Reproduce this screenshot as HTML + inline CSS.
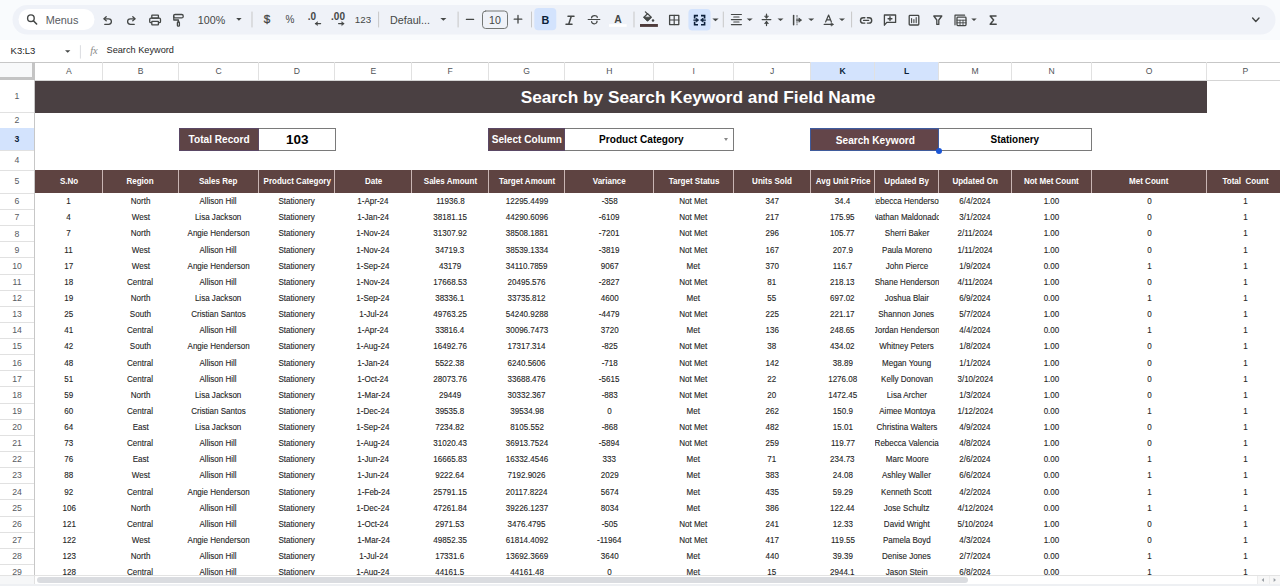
<!DOCTYPE html>
<html><head><meta charset="utf-8"><title>Search by Search Keyword and Field Name</title>
<style>
*{box-sizing:border-box;margin:0;padding:0}
html,body{width:1280px;height:586px;overflow:hidden;background:#f9fbfd;font-family:"Liberation Sans",sans-serif;}
.a{position:absolute}
.c{position:absolute;display:flex;align-items:center;justify-content:center;white-space:nowrap;overflow:hidden}
#tb{left:12.5px;top:5px;width:1263px;height:29.5px;border-radius:15px;background:#eef2f9}
#menus{left:18.5px;top:8.5px;width:76px;height:21.5px;border-radius:11px;background:#fff}
.ic{position:absolute;color:#444746}
.sep{position:absolute;top:12.5px;width:1px;height:14px;background:#c7c7c7}
#fb{left:0;top:40px;width:1280px;height:22px;background:#fff}
#grid{left:0;top:62px;width:1280px;height:513px;background:#fff;overflow:hidden}
.hl{position:absolute;height:1px;background:#e1e1e1}
.vl{position:absolute;width:1px;background:#e1e1e1}
.colh{position:absolute;top:0;height:18px;font-size:8.6px;color:#4f5357;display:flex;align-items:center;justify-content:center}
.rowh{position:absolute;left:0;width:34px;font-size:8.7px;color:#575b5f;display:flex;align-items:center;justify-content:center}
.d{position:absolute;display:flex;align-items:center;justify-content:center;white-space:nowrap;overflow:hidden;font-size:8.7px;color:#1f1f1f;height:16px;-webkit-text-stroke:0.12px #1f1f1f}
.d span{display:inline-block;transform:translateY(0.25px) scaleX(0.925)}
.h{position:absolute;display:flex;align-items:center;justify-content:center;white-space:pre;overflow:hidden;font-size:8.9px;font-weight:bold;color:#fff;top:107.6px;height:23px}
.h span{display:inline-block;transform:scaleX(0.905)}
</style></head><body>

<div class="a" id="fb"></div>
<svg class="a" style="left:0;top:0" width="1280" height="62" viewBox="0 0 1280 62" fill="none" stroke="#444746" stroke-width="1.3" stroke-linecap="round" stroke-linejoin="round">
<rect x="12.5" y="5" width="1263" height="29.5" rx="14.75" fill="#eff2f8" stroke="none"/>
<rect x="18.5" y="9" width="76" height="21" rx="10.5" fill="#fff" stroke="none"/>
<circle cx="30.9" cy="18.2" r="3.3" stroke-width="1.4"/><path d="M33.4 20.8 L36.6 24" stroke-width="1.6"/>
<path d="M104.2 18.8 H108.6 A2.8 2.8 0 0 1 108.6 24.4 H104.8"/><path d="M106.2 16.8 L104 18.8 L106.2 20.8"/>
<path d="M134.8 18.8 H130.4 A2.8 2.8 0 0 0 130.4 24.4 H134.2"/><path d="M132.8 16.8 L135 18.8 L132.8 20.8"/>
<rect x="151.8" y="15.2" width="6.6" height="3" rx="0.4"/><rect x="149.7" y="18.2" width="10.8" height="4.4" rx="1.2"/><rect x="151.8" y="21.4" width="6.6" height="3.4" rx="0.4" fill="#eff2f8"/>
<rect x="173.6" y="14.5" width="9.6" height="3.4" rx="1.5"/><path d="M173.8 16.4 V20 H178.4 V22"/><rect x="177.4" y="22" width="2" height="4.2" rx="0.8"/>
<path d="M252 12 V27" stroke="#c7c7c7" stroke-width="1"/>
<path d="M378.6 12 V27" stroke="#c7c7c7" stroke-width="1"/>
<path d="M458.1 12 V27" stroke="#c7c7c7" stroke-width="1"/>
<path d="M531.5 12 V27" stroke="#c7c7c7" stroke-width="1"/>
<path d="M634 12 V27" stroke="#c7c7c7" stroke-width="1"/>
<path d="M723.3 12 V27" stroke="#c7c7c7" stroke-width="1"/>
<path d="M851.6 12 V27" stroke="#c7c7c7" stroke-width="1"/>
<path d="M236.2 18 L241.6 18 L238.89999999999998 20.8 Z" fill="#444746" stroke="none"/>
<path d="M440.4 18 L446.4 18 L443.4 20.8 Z" fill="#444746" stroke="none"/>
<path d="M712.4 18.4 L718.6 18.4 L715.5 21.2 Z" fill="#444746" stroke="none"/>
<path d="M746.7 18.5 L752.7 18.5 L749.7 21.1 Z" fill="#444746" stroke="none"/>
<path d="M777.5 18.5 L783.5 18.5 L780.5 21.1 Z" fill="#444746" stroke="none"/>
<path d="M808.2 18.5 L814.2 18.5 L811.2 21.1 Z" fill="#444746" stroke="none"/>
<path d="M839 18.5 L845 18.5 L842.0 21.1 Z" fill="#444746" stroke="none"/>
<path d="M971.3 18.5 L976.7 18.5 L974.0 21.1 Z" fill="#444746" stroke="none"/>
<path d="M466.4 19.4 H473.6" stroke-width="1.3"/>
<path d="M514.2 19.2 H521.8 M518 15.4 V23" stroke-width="1.3"/>
<rect x="482.5" y="11" width="25" height="17.5" rx="3.2" stroke="#747775" stroke-width="1"/>
<rect x="534.3" y="8" width="22" height="22.2" rx="4" fill="#d3e3fd" stroke="none"/>
<rect x="688.4" y="8.9" width="22.2" height="21.5" rx="4" fill="#d3e3fd" stroke="none"/>
<path d="M568 16.2 H574 M566 24.2 H572 M571.3 16.2 L568.7 24.2" stroke-width="1.5"/>
<path d="M588.2 19.5 H599.8" stroke-width="1.2"/><path d="M591.6 17.8 C591.8 15 597.4 15 597.2 17.4" stroke-width="1.3"/><path d="M597 21.2 C597.2 24.6 591.6 24.6 591.6 21.6" stroke-width="1.3"/>
<rect x="609" y="24.2" width="17.7" height="2.6" fill="#ffffff" stroke="none"/>
<rect x="640" y="24" width="17.9" height="2.9" fill="#4e3b3b" stroke="none"/>
<path d="M645.4 11.9 L647.4 13.9" stroke-width="1.3"/><path d="M647.6 13.6 L651.2 17.2 L647.6 20.8 L644 17.2 Z" stroke-width="1.3"/><path d="M644 17.2 L651.2 17.2 L647.6 20.8 Z" fill="#444746" stroke="#444746" stroke-width="0.8"/><circle cx="653" cy="20.4" r="1.25" fill="#444746" stroke="none"/>
<rect x="669.6" y="15.4" width="9.2" height="9.2" stroke-width="1.3"/><path d="M674.2 15.4 V24.6 M669.6 20 H678.8" stroke-width="1.2"/>
<path d="M698 15.6 H694.6 V18.4 M694.6 21.8 V24.8 H698 M701 15.6 H704.6 V18.4 M704.6 21.8 V24.8 H701" stroke="#0b1f3a" stroke-width="1.6" stroke-linecap="butt" stroke-linejoin="miter"/><path d="M693.8 20.1 H697 M705.4 20.1 H702.2" stroke="#0b1f3a" stroke-width="1.2"/><path d="M696.4 18.3 L698.7 20.1 L696.4 21.9 Z M702.8 18.3 L700.5 20.1 L702.8 21.9 Z" fill="#0b1f3a" stroke="#0b1f3a" stroke-width="0.7"/>
<path d="M731.4 14.5 H741.4 M733.8 17 H739 M731.4 19.6 H741.4 M733.8 22 H739 M731.4 24.6 H741.4" stroke-width="1.2"/>
<path d="M762.2 19.6 H770.8" stroke-width="1.3"/><path d="M766.5 14 V18 M766.5 21.4 V25.6" stroke-width="1.2"/><path d="M764.8 16.4 L766.5 18.2 L768.2 16.4 Z M764.8 23.2 L766.5 21.2 L768.2 23.2 Z" fill="#444746" stroke="#444746" stroke-width="0.8"/>
<path d="M793.6 15.4 V24.8" stroke-width="1.5"/><path d="M797 15.4 V24.8" stroke-width="0.8" stroke-dasharray="1.6 1.2"/><path d="M796.6 20.1 H801" stroke-width="1.2"/><path d="M799.2 18.2 L801.4 20.1 L799.2 22 Z" fill="#444746" stroke="#444746" stroke-width="0.8"/>
<path d="M825.6 22 L828.6 15 L831.4 22 M826.6 19.8 H830.6" stroke-width="1.2"/><path d="M824.2 24.4 H833" stroke-width="1.2"/><path d="M831.4 22.9 L833.4 24.4 L831.4 25.9 Z" fill="#444746" stroke="#444746" stroke-width="0.6"/>
<path d="M864.8 17.7 H863.2 A2.7 2.7 0 0 0 863.2 23.1 H864.8 M867.4 17.7 H869 A2.7 2.7 0 0 1 869 23.1 H867.4 M863.6 20.4 H868.6" stroke-width="1.4"/>
<path d="M884.4 25.2 V15 H895.6 V22.4 H886.8 Z" stroke-width="1.3"/><path d="M890 16.8 V20.6 M888.1 18.7 H891.9" stroke-width="1.4"/>
<rect x="909.2" y="15.4" width="9.6" height="9.6" rx="0.8" stroke-width="1.3"/><path d="M911.6 18.6 V22.6 M913.9 19.6 V22.6 M916.2 17.6 V22.6" stroke-width="1.1"/>
<path d="M933.8 16 H941.8 L938.8 20 V24.4 H936.8 V20 Z" stroke-width="1.3"/>
<path d="M955 24.8 V15.2 H964.6" stroke-width="1.2"/><rect x="957" y="17.2" width="9" height="8.4" rx="0.8" stroke-width="1.3"/><path d="M957 20.2 H966 M957 22.8 H966 M960 20.2 V25.6 M963 20.2 V25.6" stroke-width="0.9"/>
<path d="M996 15.9 H990.2 L993.6 20 L990.2 24.2 H996.2" stroke-width="1.5"/>
<path d="M320.6 23.6 H315.4" stroke-width="1.2"/><path d="M317.2 21.9 L315.2 23.6 L317.2 25.3 Z" fill="#444746" stroke="#444746" stroke-width="0.6"/>
<path d="M338.6 23.6 H343.8" stroke-width="1.2"/><path d="M342 21.9 L344 23.6 L342 25.3 Z" fill="#444746" stroke="#444746" stroke-width="0.6"/>
<path d="M1252.6 18 L1255.8 21.4 L1259 18" stroke-width="1.4"/>
<path d="M65 50.2 L70.4 50.2 L67.7 52.8 Z" fill="#444746" stroke="none"/>
<path d="M80.4 45.6 V58.2" stroke="#dadce0" stroke-width="1"/>
</svg>
<div class="c" style="left:44px;top:12px;width:36px;height:15px;font-size:10.9px;color:#444746;color:#575b5f">Menus</div>
<div class="c" style="left:196px;top:12px;width:31px;height:15px;font-size:10.7px;color:#444746;">100%</div>
<div class="c" style="left:262px;top:11.4px;width:10px;height:15px;font-size:11.6px;color:#444746;font-weight:normal;-webkit-text-stroke:0.3px #444746">$</div>
<div class="c" style="left:284px;top:12px;width:12px;height:15px;font-size:10px;color:#444746;">%</div>
<div class="c" style="left:306px;top:10px;width:12px;height:13px;font-size:10px;color:#444746;font-weight:bold">.0</div>
<div class="c" style="left:330px;top:10px;width:16px;height:13px;font-size:10px;color:#444746;font-weight:bold">.00</div>
<div class="c" style="left:355px;top:12px;width:16px;height:15px;font-size:9.8px;color:#444746;">123</div>
<div class="c" style="left:388px;top:12px;width:44px;height:15px;font-size:10.7px;color:#444746;">Defaul...</div>
<div class="c" style="left:487px;top:12px;width:16px;height:15px;font-size:10.6px;color:#444746;">10</div>
<div class="c" style="left:537px;top:12.5px;width:17px;height:15px;font-size:10.8px;color:#444746;font-weight:bold;color:#0b1f3a">B</div>
<div class="c" style="left:608px;top:12px;width:20px;height:15px;font-size:10.4px;color:#444746;font-weight:bold">A</div>
<div class="c" style="left:6px;top:43px;width:34px;height:15px;font-size:9.5px;color:#444746;color:#1f1f1f">K3:L3</div>
<div class="c" style="left:88px;top:43px;width:12px;height:15px;font-size:10.5px;color:#444746;font-family:'Liberation Serif',serif;color:#8a8a8a"><i>fx</i></div>
<div class="a" style="left:106.5px;top:43px;height:15px;line-height:15px;font-size:9.2px;color:#1f1f1f;white-space:nowrap">Search Keyword</div>
<div class="a" id="grid">
<div class="a" style="left:0;top:0;width:1280px;height:1px;background:#c7c7c7"></div>
<div class="a" style="left:0;top:1px;width:32px;height:15px;background:#f8f9fa"></div>
<div class="a" style="left:31.5px;top:0;width:3px;height:18px;background:#c4c4c4"></div>
<div class="a" style="left:0;top:15px;width:34.5px;height:3.4px;background:#c4c4c4"></div>
<div class="colh" style="left:35px;width:67.5px;">A</div>
<div class="vl" style="left:101.5px;top:0;height:18px"></div>
<div class="colh" style="left:102.5px;width:76px;">B</div>
<div class="vl" style="left:177.5px;top:0;height:18px"></div>
<div class="colh" style="left:178.5px;width:80px;">C</div>
<div class="vl" style="left:257.5px;top:0;height:18px"></div>
<div class="colh" style="left:258.5px;width:76.5px;">D</div>
<div class="vl" style="left:334px;top:0;height:18px"></div>
<div class="colh" style="left:335px;width:76.5px;">E</div>
<div class="vl" style="left:410.5px;top:0;height:18px"></div>
<div class="colh" style="left:411.5px;width:77px;">F</div>
<div class="vl" style="left:487.5px;top:0;height:18px"></div>
<div class="colh" style="left:488.5px;width:76.3px;">G</div>
<div class="vl" style="left:563.8px;top:0;height:18px"></div>
<div class="colh" style="left:564.8px;width:88.9px;">H</div>
<div class="vl" style="left:652.7px;top:0;height:18px"></div>
<div class="colh" style="left:653.7px;width:80px;">I</div>
<div class="vl" style="left:732.7px;top:0;height:18px"></div>
<div class="colh" style="left:733.7px;width:77px;">J</div>
<div class="vl" style="left:809.7px;top:0;height:18px"></div>
<div class="colh" style="left:810.7px;width:64px;background:#d3e3fd;font-weight:bold;color:#0b1f3a;">K</div>
<div class="vl" style="left:873.7px;top:0;height:18px"></div>
<div class="colh" style="left:874.7px;width:64px;background:#d3e3fd;font-weight:bold;color:#0b1f3a;">L</div>
<div class="vl" style="left:937.7px;top:0;height:18px"></div>
<div class="colh" style="left:938.7px;width:72.8px;">M</div>
<div class="vl" style="left:1010.5px;top:0;height:18px"></div>
<div class="colh" style="left:1011.5px;width:80px;">N</div>
<div class="vl" style="left:1090.5px;top:0;height:18px"></div>
<div class="colh" style="left:1091.5px;width:115px;">O</div>
<div class="vl" style="left:1205.5px;top:0;height:18px"></div>
<div class="colh" style="left:1206.5px;width:77.5px;">P</div>
<div class="vl" style="left:1283px;top:0;height:18px"></div>
<div class="rowh" style="top:18px;height:32.3px;">1</div>
<div class="hl" style="left:0;top:50px;width:34px"></div>
<div class="rowh" style="top:50.3px;height:16px;">2</div>
<div class="hl" style="left:0;top:66px;width:34px"></div>
<div class="rowh" style="top:66.3px;height:21.9px;background:#d3e3fd;font-weight:bold;color:#0b1f3a;">3</div>
<div class="hl" style="left:0;top:87.9px;width:34px"></div>
<div class="rowh" style="top:88.2px;height:19.6px;">4</div>
<div class="hl" style="left:0;top:107.5px;width:34px"></div>
<div class="rowh" style="top:107.8px;height:23.4px;">5</div>
<div class="hl" style="left:0;top:130.9px;width:34px"></div>
<div class="rowh" style="top:131.2px;height:16.13px;">6</div>
<div class="hl" style="left:0;top:147.03px;width:34px"></div>
<div class="rowh" style="top:147.33px;height:16.13px;">7</div>
<div class="hl" style="left:0;top:163.16px;width:34px"></div>
<div class="rowh" style="top:163.46px;height:16.13px;">8</div>
<div class="hl" style="left:0;top:179.29px;width:34px"></div>
<div class="rowh" style="top:179.59px;height:16.13px;">9</div>
<div class="hl" style="left:0;top:195.42px;width:34px"></div>
<div class="rowh" style="top:195.72px;height:16.13px;">10</div>
<div class="hl" style="left:0;top:211.55px;width:34px"></div>
<div class="rowh" style="top:211.85px;height:16.13px;">11</div>
<div class="hl" style="left:0;top:227.68px;width:34px"></div>
<div class="rowh" style="top:227.98px;height:16.13px;">12</div>
<div class="hl" style="left:0;top:243.81px;width:34px"></div>
<div class="rowh" style="top:244.11px;height:16.13px;">13</div>
<div class="hl" style="left:0;top:259.94px;width:34px"></div>
<div class="rowh" style="top:260.24px;height:16.13px;">14</div>
<div class="hl" style="left:0;top:276.07px;width:34px"></div>
<div class="rowh" style="top:276.37px;height:16.13px;">15</div>
<div class="hl" style="left:0;top:292.2px;width:34px"></div>
<div class="rowh" style="top:292.5px;height:16.13px;">16</div>
<div class="hl" style="left:0;top:308.33px;width:34px"></div>
<div class="rowh" style="top:308.63px;height:16.13px;">17</div>
<div class="hl" style="left:0;top:324.46px;width:34px"></div>
<div class="rowh" style="top:324.76px;height:16.13px;">18</div>
<div class="hl" style="left:0;top:340.59px;width:34px"></div>
<div class="rowh" style="top:340.89px;height:16.13px;">19</div>
<div class="hl" style="left:0;top:356.72px;width:34px"></div>
<div class="rowh" style="top:357.02px;height:16.13px;">20</div>
<div class="hl" style="left:0;top:372.85px;width:34px"></div>
<div class="rowh" style="top:373.15px;height:16.13px;">21</div>
<div class="hl" style="left:0;top:388.98px;width:34px"></div>
<div class="rowh" style="top:389.28px;height:16.13px;">22</div>
<div class="hl" style="left:0;top:405.11px;width:34px"></div>
<div class="rowh" style="top:405.41px;height:16.13px;">23</div>
<div class="hl" style="left:0;top:421.24px;width:34px"></div>
<div class="rowh" style="top:421.54px;height:16.13px;">24</div>
<div class="hl" style="left:0;top:437.37px;width:34px"></div>
<div class="rowh" style="top:437.67px;height:16.13px;">25</div>
<div class="hl" style="left:0;top:453.5px;width:34px"></div>
<div class="rowh" style="top:453.8px;height:16.13px;">26</div>
<div class="hl" style="left:0;top:469.63px;width:34px"></div>
<div class="rowh" style="top:469.93px;height:16.13px;">27</div>
<div class="hl" style="left:0;top:485.76px;width:34px"></div>
<div class="rowh" style="top:486.06px;height:16.13px;">28</div>
<div class="hl" style="left:0;top:501.89px;width:34px"></div>
<div class="rowh" style="top:502.19px;height:16.13px;">29</div>
<div class="hl" style="left:0;top:518.02px;width:34px"></div>
<div class="vl" style="left:34px;top:18px;height:500px;background:#c7c7c7"></div>
<div class="a" style="left:34px;top:17.5px;width:1246px;height:1px;background:#d5d5d5"></div>
<div class="a" style="left:35px;top:18.6px;width:1171.5px;height:32.4px;background:#4a4042"></div>
<div class="c" style="left:520px;top:19.4px;width:356px;height:32px;font-size:17.25px;font-weight:bold;color:#fff">Search by Search Keyword and Field Name</div>
<div class="a" style="left:178.7px;top:66.4px;width:157px;height:22.6px;border:1px solid #7a7a7a;background:#fff"></div>
<div class="c" style="left:178.7px;top:66.4px;width:80.2px;height:22.6px;background:#5e4446;padding-left:0px;border:1px solid #5a4865;font-size:10.3px;font-weight:bold;color:#fff"><span style="display:inline-block;transform:scaleX(0.98)">Total Record</span></div>
<div class="c" style="left:258.9px;top:66.8px;width:76.8px;height:22px;font-size:13.49px;font-weight:bold;color:#000"><span style="display:inline-block;transform:scaleX(1.0)">103</span></div>
<div class="a" style="left:488.1px;top:66.4px;width:245.8px;height:22.6px;border:1px solid #7a7a7a;background:#fff"></div>
<div class="c" style="left:488.1px;top:66.4px;width:76.8px;height:22.6px;background:#5e4446;padding-left:0px;border:1px solid #5a4865;font-size:10.3px;font-weight:bold;color:#fff"><span style="display:inline-block;transform:scaleX(0.98)">Select Column</span></div>
<div class="c" style="left:564.9px;top:66.4px;width:153.4px;height:22px;font-size:10.35px;font-weight:bold;color:#000"><span style="display:inline-block;transform:scaleX(0.975)">Product Category</span></div>
<div class="a" style="left:723.5px;top:76.3px;width:0;height:0;border-left:2.5px solid transparent;border-right:2.5px solid transparent;border-top:3px solid #888"></div>
<div class="a" style="left:809.8px;top:66.4px;width:282px;height:22.6px;border:1px solid #7a7a7a;background:#fff"></div>
<div class="c" style="left:809.8px;top:66.9px;width:128.9px;height:22.6px;background:#634549;padding-left:2px;border:1px solid #5a4865;font-size:10.3px;font-weight:bold;color:#fff"><span style="display:inline-block;transform:scaleX(0.98)">Search Keyword</span></div>
<div class="c" style="left:938.7px;top:66.4px;width:153.1px;height:22px;font-size:10.19px;font-weight:bold;color:#000"><span style="display:inline-block;transform:scaleX(0.975)">Stationery</span></div>
<div class="a" style="left:809.5px;top:66px;width:129.5px;height:22.6px;border:1.8px solid #3f5b9c;border-right-width:0.8px"></div>
<div class="a" style="left:935.7px;top:86px;width:6px;height:6px;border-radius:50%;background:#1a56d6"></div>
<div class="a" style="left:35px;top:108px;width:1245px;height:23px;background:#5e4341"></div>
<div class="h" style="left:35px;width:67.5px"><span>S.No</span></div>
<div class="a" style="left:101.5px;top:108px;width:1px;height:23px;background:#c9b5b3"></div>
<div class="h" style="left:102.5px;width:76px"><span>Region</span></div>
<div class="a" style="left:177.5px;top:108px;width:1px;height:23px;background:#c9b5b3"></div>
<div class="h" style="left:178.5px;width:80px"><span>Sales Rep</span></div>
<div class="a" style="left:257.5px;top:108px;width:1px;height:23px;background:#c9b5b3"></div>
<div class="h" style="left:258.5px;width:76.5px"><span>Product Category</span></div>
<div class="a" style="left:334px;top:108px;width:1px;height:23px;background:#c9b5b3"></div>
<div class="h" style="left:335px;width:76.5px"><span>Date</span></div>
<div class="a" style="left:410.5px;top:108px;width:1px;height:23px;background:#c9b5b3"></div>
<div class="h" style="left:411.5px;width:77px"><span>Sales Amount</span></div>
<div class="a" style="left:487.5px;top:108px;width:1px;height:23px;background:#c9b5b3"></div>
<div class="h" style="left:488.5px;width:76.3px"><span>Target Amount</span></div>
<div class="a" style="left:563.8px;top:108px;width:1px;height:23px;background:#c9b5b3"></div>
<div class="h" style="left:564.8px;width:88.9px"><span>Variance</span></div>
<div class="a" style="left:652.7px;top:108px;width:1px;height:23px;background:#c9b5b3"></div>
<div class="h" style="left:653.7px;width:80px"><span>Target Status</span></div>
<div class="a" style="left:732.7px;top:108px;width:1px;height:23px;background:#c9b5b3"></div>
<div class="h" style="left:733.7px;width:77px"><span>Units Sold</span></div>
<div class="a" style="left:809.7px;top:108px;width:1px;height:23px;background:#c9b5b3"></div>
<div class="h" style="left:810.7px;width:64px"><span>Avg Unit Price</span></div>
<div class="a" style="left:873.7px;top:108px;width:1px;height:23px;background:#c9b5b3"></div>
<div class="h" style="left:874.7px;width:64px"><span>Updated By</span></div>
<div class="a" style="left:937.7px;top:108px;width:1px;height:23px;background:#c9b5b3"></div>
<div class="h" style="left:938.7px;width:72.8px"><span>Updated On</span></div>
<div class="a" style="left:1010.5px;top:108px;width:1px;height:23px;background:#c9b5b3"></div>
<div class="h" style="left:1011.5px;width:80px"><span>Not Met Count</span></div>
<div class="a" style="left:1090.5px;top:108px;width:1px;height:23px;background:#c9b5b3"></div>
<div class="h" style="left:1091.5px;width:115px"><span>Met Count</span></div>
<div class="a" style="left:1205.5px;top:108px;width:1px;height:23px;background:#c9b5b3"></div>
<div class="h" style="left:1206.5px;width:77.5px"><span>Total  Count</span></div>
<div class="d" style="left:35px;top:131.2px;width:67.5px"><span>1</span></div>
<div class="d" style="left:102.5px;top:131.2px;width:76px"><span>North</span></div>
<div class="d" style="left:178.5px;top:131.2px;width:80px"><span>Allison Hill</span></div>
<div class="d" style="left:258.5px;top:131.2px;width:76.5px"><span>Stationery</span></div>
<div class="d" style="left:335px;top:131.2px;width:76.5px"><span>1-Apr-24</span></div>
<div class="d" style="left:411.5px;top:131.2px;width:77px"><span>11936.8</span></div>
<div class="d" style="left:488.5px;top:131.2px;width:76.3px"><span>12295.4499</span></div>
<div class="d" style="left:564.8px;top:131.2px;width:88.9px"><span>-358</span></div>
<div class="d" style="left:653.7px;top:131.2px;width:80px"><span>Not Met</span></div>
<div class="d" style="left:733.7px;top:131.2px;width:77px"><span>347</span></div>
<div class="d" style="left:810.7px;top:131.2px;width:64px"><span>34.4</span></div>
<div class="d" style="left:874.7px;top:131.2px;width:64px"><span>Rebecca Henderson</span></div>
<div class="d" style="left:938.7px;top:131.2px;width:72.8px"><span>6/4/2024</span></div>
<div class="d" style="left:1011.5px;top:131.2px;width:80px"><span>1.00</span></div>
<div class="d" style="left:1091.5px;top:131.2px;width:115px"><span>0</span></div>
<div class="d" style="left:1206.5px;top:131.2px;width:77.5px"><span>1</span></div>
<div class="d" style="left:35px;top:147.33px;width:67.5px"><span>4</span></div>
<div class="d" style="left:102.5px;top:147.33px;width:76px"><span>West</span></div>
<div class="d" style="left:178.5px;top:147.33px;width:80px"><span>Lisa Jackson</span></div>
<div class="d" style="left:258.5px;top:147.33px;width:76.5px"><span>Stationery</span></div>
<div class="d" style="left:335px;top:147.33px;width:76.5px"><span>1-Jan-24</span></div>
<div class="d" style="left:411.5px;top:147.33px;width:77px"><span>38181.15</span></div>
<div class="d" style="left:488.5px;top:147.33px;width:76.3px"><span>44290.6096</span></div>
<div class="d" style="left:564.8px;top:147.33px;width:88.9px"><span>-6109</span></div>
<div class="d" style="left:653.7px;top:147.33px;width:80px"><span>Not Met</span></div>
<div class="d" style="left:733.7px;top:147.33px;width:77px"><span>217</span></div>
<div class="d" style="left:810.7px;top:147.33px;width:64px"><span>175.95</span></div>
<div class="d" style="left:874.7px;top:147.33px;width:64px"><span>Nathan Maldonado</span></div>
<div class="d" style="left:938.7px;top:147.33px;width:72.8px"><span>3/1/2024</span></div>
<div class="d" style="left:1011.5px;top:147.33px;width:80px"><span>1.00</span></div>
<div class="d" style="left:1091.5px;top:147.33px;width:115px"><span>0</span></div>
<div class="d" style="left:1206.5px;top:147.33px;width:77.5px"><span>1</span></div>
<div class="d" style="left:35px;top:163.46px;width:67.5px"><span>7</span></div>
<div class="d" style="left:102.5px;top:163.46px;width:76px"><span>North</span></div>
<div class="d" style="left:178.5px;top:163.46px;width:80px"><span>Angie Henderson</span></div>
<div class="d" style="left:258.5px;top:163.46px;width:76.5px"><span>Stationery</span></div>
<div class="d" style="left:335px;top:163.46px;width:76.5px"><span>1-Nov-24</span></div>
<div class="d" style="left:411.5px;top:163.46px;width:77px"><span>31307.92</span></div>
<div class="d" style="left:488.5px;top:163.46px;width:76.3px"><span>38508.1881</span></div>
<div class="d" style="left:564.8px;top:163.46px;width:88.9px"><span>-7201</span></div>
<div class="d" style="left:653.7px;top:163.46px;width:80px"><span>Not Met</span></div>
<div class="d" style="left:733.7px;top:163.46px;width:77px"><span>296</span></div>
<div class="d" style="left:810.7px;top:163.46px;width:64px"><span>105.77</span></div>
<div class="d" style="left:874.7px;top:163.46px;width:64px"><span>Sherri Baker</span></div>
<div class="d" style="left:938.7px;top:163.46px;width:72.8px"><span>2/11/2024</span></div>
<div class="d" style="left:1011.5px;top:163.46px;width:80px"><span>1.00</span></div>
<div class="d" style="left:1091.5px;top:163.46px;width:115px"><span>0</span></div>
<div class="d" style="left:1206.5px;top:163.46px;width:77.5px"><span>1</span></div>
<div class="d" style="left:35px;top:179.59px;width:67.5px"><span>11</span></div>
<div class="d" style="left:102.5px;top:179.59px;width:76px"><span>West</span></div>
<div class="d" style="left:178.5px;top:179.59px;width:80px"><span>Allison Hill</span></div>
<div class="d" style="left:258.5px;top:179.59px;width:76.5px"><span>Stationery</span></div>
<div class="d" style="left:335px;top:179.59px;width:76.5px"><span>1-Nov-24</span></div>
<div class="d" style="left:411.5px;top:179.59px;width:77px"><span>34719.3</span></div>
<div class="d" style="left:488.5px;top:179.59px;width:76.3px"><span>38539.1334</span></div>
<div class="d" style="left:564.8px;top:179.59px;width:88.9px"><span>-3819</span></div>
<div class="d" style="left:653.7px;top:179.59px;width:80px"><span>Not Met</span></div>
<div class="d" style="left:733.7px;top:179.59px;width:77px"><span>167</span></div>
<div class="d" style="left:810.7px;top:179.59px;width:64px"><span>207.9</span></div>
<div class="d" style="left:874.7px;top:179.59px;width:64px"><span>Paula Moreno</span></div>
<div class="d" style="left:938.7px;top:179.59px;width:72.8px"><span>1/11/2024</span></div>
<div class="d" style="left:1011.5px;top:179.59px;width:80px"><span>1.00</span></div>
<div class="d" style="left:1091.5px;top:179.59px;width:115px"><span>0</span></div>
<div class="d" style="left:1206.5px;top:179.59px;width:77.5px"><span>1</span></div>
<div class="d" style="left:35px;top:195.72px;width:67.5px"><span>17</span></div>
<div class="d" style="left:102.5px;top:195.72px;width:76px"><span>West</span></div>
<div class="d" style="left:178.5px;top:195.72px;width:80px"><span>Angie Henderson</span></div>
<div class="d" style="left:258.5px;top:195.72px;width:76.5px"><span>Stationery</span></div>
<div class="d" style="left:335px;top:195.72px;width:76.5px"><span>1-Sep-24</span></div>
<div class="d" style="left:411.5px;top:195.72px;width:77px"><span>43179</span></div>
<div class="d" style="left:488.5px;top:195.72px;width:76.3px"><span>34110.7859</span></div>
<div class="d" style="left:564.8px;top:195.72px;width:88.9px"><span>9067</span></div>
<div class="d" style="left:653.7px;top:195.72px;width:80px"><span>Met</span></div>
<div class="d" style="left:733.7px;top:195.72px;width:77px"><span>370</span></div>
<div class="d" style="left:810.7px;top:195.72px;width:64px"><span>116.7</span></div>
<div class="d" style="left:874.7px;top:195.72px;width:64px"><span>John Pierce</span></div>
<div class="d" style="left:938.7px;top:195.72px;width:72.8px"><span>1/9/2024</span></div>
<div class="d" style="left:1011.5px;top:195.72px;width:80px"><span>0.00</span></div>
<div class="d" style="left:1091.5px;top:195.72px;width:115px"><span>1</span></div>
<div class="d" style="left:1206.5px;top:195.72px;width:77.5px"><span>1</span></div>
<div class="d" style="left:35px;top:211.85px;width:67.5px"><span>18</span></div>
<div class="d" style="left:102.5px;top:211.85px;width:76px"><span>Central</span></div>
<div class="d" style="left:178.5px;top:211.85px;width:80px"><span>Allison Hill</span></div>
<div class="d" style="left:258.5px;top:211.85px;width:76.5px"><span>Stationery</span></div>
<div class="d" style="left:335px;top:211.85px;width:76.5px"><span>1-Nov-24</span></div>
<div class="d" style="left:411.5px;top:211.85px;width:77px"><span>17668.53</span></div>
<div class="d" style="left:488.5px;top:211.85px;width:76.3px"><span>20495.576</span></div>
<div class="d" style="left:564.8px;top:211.85px;width:88.9px"><span>-2827</span></div>
<div class="d" style="left:653.7px;top:211.85px;width:80px"><span>Not Met</span></div>
<div class="d" style="left:733.7px;top:211.85px;width:77px"><span>81</span></div>
<div class="d" style="left:810.7px;top:211.85px;width:64px"><span>218.13</span></div>
<div class="d" style="left:874.7px;top:211.85px;width:64px"><span>Shane Henderson</span></div>
<div class="d" style="left:938.7px;top:211.85px;width:72.8px"><span>4/11/2024</span></div>
<div class="d" style="left:1011.5px;top:211.85px;width:80px"><span>1.00</span></div>
<div class="d" style="left:1091.5px;top:211.85px;width:115px"><span>0</span></div>
<div class="d" style="left:1206.5px;top:211.85px;width:77.5px"><span>1</span></div>
<div class="d" style="left:35px;top:227.98px;width:67.5px"><span>19</span></div>
<div class="d" style="left:102.5px;top:227.98px;width:76px"><span>North</span></div>
<div class="d" style="left:178.5px;top:227.98px;width:80px"><span>Lisa Jackson</span></div>
<div class="d" style="left:258.5px;top:227.98px;width:76.5px"><span>Stationery</span></div>
<div class="d" style="left:335px;top:227.98px;width:76.5px"><span>1-Sep-24</span></div>
<div class="d" style="left:411.5px;top:227.98px;width:77px"><span>38336.1</span></div>
<div class="d" style="left:488.5px;top:227.98px;width:76.3px"><span>33735.812</span></div>
<div class="d" style="left:564.8px;top:227.98px;width:88.9px"><span>4600</span></div>
<div class="d" style="left:653.7px;top:227.98px;width:80px"><span>Met</span></div>
<div class="d" style="left:733.7px;top:227.98px;width:77px"><span>55</span></div>
<div class="d" style="left:810.7px;top:227.98px;width:64px"><span>697.02</span></div>
<div class="d" style="left:874.7px;top:227.98px;width:64px"><span>Joshua Blair</span></div>
<div class="d" style="left:938.7px;top:227.98px;width:72.8px"><span>6/9/2024</span></div>
<div class="d" style="left:1011.5px;top:227.98px;width:80px"><span>0.00</span></div>
<div class="d" style="left:1091.5px;top:227.98px;width:115px"><span>1</span></div>
<div class="d" style="left:1206.5px;top:227.98px;width:77.5px"><span>1</span></div>
<div class="d" style="left:35px;top:244.11px;width:67.5px"><span>25</span></div>
<div class="d" style="left:102.5px;top:244.11px;width:76px"><span>South</span></div>
<div class="d" style="left:178.5px;top:244.11px;width:80px"><span>Cristian Santos</span></div>
<div class="d" style="left:258.5px;top:244.11px;width:76.5px"><span>Stationery</span></div>
<div class="d" style="left:335px;top:244.11px;width:76.5px"><span>1-Jul-24</span></div>
<div class="d" style="left:411.5px;top:244.11px;width:77px"><span>49763.25</span></div>
<div class="d" style="left:488.5px;top:244.11px;width:76.3px"><span>54240.9288</span></div>
<div class="d" style="left:564.8px;top:244.11px;width:88.9px"><span>-4479</span></div>
<div class="d" style="left:653.7px;top:244.11px;width:80px"><span>Not Met</span></div>
<div class="d" style="left:733.7px;top:244.11px;width:77px"><span>225</span></div>
<div class="d" style="left:810.7px;top:244.11px;width:64px"><span>221.17</span></div>
<div class="d" style="left:874.7px;top:244.11px;width:64px"><span>Shannon Jones</span></div>
<div class="d" style="left:938.7px;top:244.11px;width:72.8px"><span>5/7/2024</span></div>
<div class="d" style="left:1011.5px;top:244.11px;width:80px"><span>1.00</span></div>
<div class="d" style="left:1091.5px;top:244.11px;width:115px"><span>0</span></div>
<div class="d" style="left:1206.5px;top:244.11px;width:77.5px"><span>1</span></div>
<div class="d" style="left:35px;top:260.24px;width:67.5px"><span>41</span></div>
<div class="d" style="left:102.5px;top:260.24px;width:76px"><span>Central</span></div>
<div class="d" style="left:178.5px;top:260.24px;width:80px"><span>Allison Hill</span></div>
<div class="d" style="left:258.5px;top:260.24px;width:76.5px"><span>Stationery</span></div>
<div class="d" style="left:335px;top:260.24px;width:76.5px"><span>1-Apr-24</span></div>
<div class="d" style="left:411.5px;top:260.24px;width:77px"><span>33816.4</span></div>
<div class="d" style="left:488.5px;top:260.24px;width:76.3px"><span>30096.7473</span></div>
<div class="d" style="left:564.8px;top:260.24px;width:88.9px"><span>3720</span></div>
<div class="d" style="left:653.7px;top:260.24px;width:80px"><span>Met</span></div>
<div class="d" style="left:733.7px;top:260.24px;width:77px"><span>136</span></div>
<div class="d" style="left:810.7px;top:260.24px;width:64px"><span>248.65</span></div>
<div class="d" style="left:874.7px;top:260.24px;width:64px"><span>Jordan Henderson</span></div>
<div class="d" style="left:938.7px;top:260.24px;width:72.8px"><span>4/4/2024</span></div>
<div class="d" style="left:1011.5px;top:260.24px;width:80px"><span>0.00</span></div>
<div class="d" style="left:1091.5px;top:260.24px;width:115px"><span>1</span></div>
<div class="d" style="left:1206.5px;top:260.24px;width:77.5px"><span>1</span></div>
<div class="d" style="left:35px;top:276.37px;width:67.5px"><span>42</span></div>
<div class="d" style="left:102.5px;top:276.37px;width:76px"><span>South</span></div>
<div class="d" style="left:178.5px;top:276.37px;width:80px"><span>Angie Henderson</span></div>
<div class="d" style="left:258.5px;top:276.37px;width:76.5px"><span>Stationery</span></div>
<div class="d" style="left:335px;top:276.37px;width:76.5px"><span>1-Aug-24</span></div>
<div class="d" style="left:411.5px;top:276.37px;width:77px"><span>16492.76</span></div>
<div class="d" style="left:488.5px;top:276.37px;width:76.3px"><span>17317.314</span></div>
<div class="d" style="left:564.8px;top:276.37px;width:88.9px"><span>-825</span></div>
<div class="d" style="left:653.7px;top:276.37px;width:80px"><span>Not Met</span></div>
<div class="d" style="left:733.7px;top:276.37px;width:77px"><span>38</span></div>
<div class="d" style="left:810.7px;top:276.37px;width:64px"><span>434.02</span></div>
<div class="d" style="left:874.7px;top:276.37px;width:64px"><span>Whitney Peters</span></div>
<div class="d" style="left:938.7px;top:276.37px;width:72.8px"><span>1/8/2024</span></div>
<div class="d" style="left:1011.5px;top:276.37px;width:80px"><span>1.00</span></div>
<div class="d" style="left:1091.5px;top:276.37px;width:115px"><span>0</span></div>
<div class="d" style="left:1206.5px;top:276.37px;width:77.5px"><span>1</span></div>
<div class="d" style="left:35px;top:292.5px;width:67.5px"><span>48</span></div>
<div class="d" style="left:102.5px;top:292.5px;width:76px"><span>Central</span></div>
<div class="d" style="left:178.5px;top:292.5px;width:80px"><span>Allison Hill</span></div>
<div class="d" style="left:258.5px;top:292.5px;width:76.5px"><span>Stationery</span></div>
<div class="d" style="left:335px;top:292.5px;width:76.5px"><span>1-Jan-24</span></div>
<div class="d" style="left:411.5px;top:292.5px;width:77px"><span>5522.38</span></div>
<div class="d" style="left:488.5px;top:292.5px;width:76.3px"><span>6240.5606</span></div>
<div class="d" style="left:564.8px;top:292.5px;width:88.9px"><span>-718</span></div>
<div class="d" style="left:653.7px;top:292.5px;width:80px"><span>Not Met</span></div>
<div class="d" style="left:733.7px;top:292.5px;width:77px"><span>142</span></div>
<div class="d" style="left:810.7px;top:292.5px;width:64px"><span>38.89</span></div>
<div class="d" style="left:874.7px;top:292.5px;width:64px"><span>Megan Young</span></div>
<div class="d" style="left:938.7px;top:292.5px;width:72.8px"><span>1/1/2024</span></div>
<div class="d" style="left:1011.5px;top:292.5px;width:80px"><span>1.00</span></div>
<div class="d" style="left:1091.5px;top:292.5px;width:115px"><span>0</span></div>
<div class="d" style="left:1206.5px;top:292.5px;width:77.5px"><span>1</span></div>
<div class="d" style="left:35px;top:308.63px;width:67.5px"><span>51</span></div>
<div class="d" style="left:102.5px;top:308.63px;width:76px"><span>Central</span></div>
<div class="d" style="left:178.5px;top:308.63px;width:80px"><span>Allison Hill</span></div>
<div class="d" style="left:258.5px;top:308.63px;width:76.5px"><span>Stationery</span></div>
<div class="d" style="left:335px;top:308.63px;width:76.5px"><span>1-Oct-24</span></div>
<div class="d" style="left:411.5px;top:308.63px;width:77px"><span>28073.76</span></div>
<div class="d" style="left:488.5px;top:308.63px;width:76.3px"><span>33688.476</span></div>
<div class="d" style="left:564.8px;top:308.63px;width:88.9px"><span>-5615</span></div>
<div class="d" style="left:653.7px;top:308.63px;width:80px"><span>Not Met</span></div>
<div class="d" style="left:733.7px;top:308.63px;width:77px"><span>22</span></div>
<div class="d" style="left:810.7px;top:308.63px;width:64px"><span>1276.08</span></div>
<div class="d" style="left:874.7px;top:308.63px;width:64px"><span>Kelly Donovan</span></div>
<div class="d" style="left:938.7px;top:308.63px;width:72.8px"><span>3/10/2024</span></div>
<div class="d" style="left:1011.5px;top:308.63px;width:80px"><span>1.00</span></div>
<div class="d" style="left:1091.5px;top:308.63px;width:115px"><span>0</span></div>
<div class="d" style="left:1206.5px;top:308.63px;width:77.5px"><span>1</span></div>
<div class="d" style="left:35px;top:324.76px;width:67.5px"><span>59</span></div>
<div class="d" style="left:102.5px;top:324.76px;width:76px"><span>North</span></div>
<div class="d" style="left:178.5px;top:324.76px;width:80px"><span>Lisa Jackson</span></div>
<div class="d" style="left:258.5px;top:324.76px;width:76.5px"><span>Stationery</span></div>
<div class="d" style="left:335px;top:324.76px;width:76.5px"><span>1-Mar-24</span></div>
<div class="d" style="left:411.5px;top:324.76px;width:77px"><span>29449</span></div>
<div class="d" style="left:488.5px;top:324.76px;width:76.3px"><span>30332.367</span></div>
<div class="d" style="left:564.8px;top:324.76px;width:88.9px"><span>-883</span></div>
<div class="d" style="left:653.7px;top:324.76px;width:80px"><span>Not Met</span></div>
<div class="d" style="left:733.7px;top:324.76px;width:77px"><span>20</span></div>
<div class="d" style="left:810.7px;top:324.76px;width:64px"><span>1472.45</span></div>
<div class="d" style="left:874.7px;top:324.76px;width:64px"><span>Lisa Archer</span></div>
<div class="d" style="left:938.7px;top:324.76px;width:72.8px"><span>1/3/2024</span></div>
<div class="d" style="left:1011.5px;top:324.76px;width:80px"><span>1.00</span></div>
<div class="d" style="left:1091.5px;top:324.76px;width:115px"><span>0</span></div>
<div class="d" style="left:1206.5px;top:324.76px;width:77.5px"><span>1</span></div>
<div class="d" style="left:35px;top:340.89px;width:67.5px"><span>60</span></div>
<div class="d" style="left:102.5px;top:340.89px;width:76px"><span>Central</span></div>
<div class="d" style="left:178.5px;top:340.89px;width:80px"><span>Cristian Santos</span></div>
<div class="d" style="left:258.5px;top:340.89px;width:76.5px"><span>Stationery</span></div>
<div class="d" style="left:335px;top:340.89px;width:76.5px"><span>1-Dec-24</span></div>
<div class="d" style="left:411.5px;top:340.89px;width:77px"><span>39535.8</span></div>
<div class="d" style="left:488.5px;top:340.89px;width:76.3px"><span>39534.98</span></div>
<div class="d" style="left:564.8px;top:340.89px;width:88.9px"><span>0</span></div>
<div class="d" style="left:653.7px;top:340.89px;width:80px"><span>Met</span></div>
<div class="d" style="left:733.7px;top:340.89px;width:77px"><span>262</span></div>
<div class="d" style="left:810.7px;top:340.89px;width:64px"><span>150.9</span></div>
<div class="d" style="left:874.7px;top:340.89px;width:64px"><span>Aimee Montoya</span></div>
<div class="d" style="left:938.7px;top:340.89px;width:72.8px"><span>1/12/2024</span></div>
<div class="d" style="left:1011.5px;top:340.89px;width:80px"><span>0.00</span></div>
<div class="d" style="left:1091.5px;top:340.89px;width:115px"><span>1</span></div>
<div class="d" style="left:1206.5px;top:340.89px;width:77.5px"><span>1</span></div>
<div class="d" style="left:35px;top:357.02px;width:67.5px"><span>64</span></div>
<div class="d" style="left:102.5px;top:357.02px;width:76px"><span>East</span></div>
<div class="d" style="left:178.5px;top:357.02px;width:80px"><span>Lisa Jackson</span></div>
<div class="d" style="left:258.5px;top:357.02px;width:76.5px"><span>Stationery</span></div>
<div class="d" style="left:335px;top:357.02px;width:76.5px"><span>1-Sep-24</span></div>
<div class="d" style="left:411.5px;top:357.02px;width:77px"><span>7234.82</span></div>
<div class="d" style="left:488.5px;top:357.02px;width:76.3px"><span>8105.552</span></div>
<div class="d" style="left:564.8px;top:357.02px;width:88.9px"><span>-868</span></div>
<div class="d" style="left:653.7px;top:357.02px;width:80px"><span>Not Met</span></div>
<div class="d" style="left:733.7px;top:357.02px;width:77px"><span>482</span></div>
<div class="d" style="left:810.7px;top:357.02px;width:64px"><span>15.01</span></div>
<div class="d" style="left:874.7px;top:357.02px;width:64px"><span>Christina Walters</span></div>
<div class="d" style="left:938.7px;top:357.02px;width:72.8px"><span>4/9/2024</span></div>
<div class="d" style="left:1011.5px;top:357.02px;width:80px"><span>1.00</span></div>
<div class="d" style="left:1091.5px;top:357.02px;width:115px"><span>0</span></div>
<div class="d" style="left:1206.5px;top:357.02px;width:77.5px"><span>1</span></div>
<div class="d" style="left:35px;top:373.15px;width:67.5px"><span>73</span></div>
<div class="d" style="left:102.5px;top:373.15px;width:76px"><span>Central</span></div>
<div class="d" style="left:178.5px;top:373.15px;width:80px"><span>Allison Hill</span></div>
<div class="d" style="left:258.5px;top:373.15px;width:76.5px"><span>Stationery</span></div>
<div class="d" style="left:335px;top:373.15px;width:76.5px"><span>1-Aug-24</span></div>
<div class="d" style="left:411.5px;top:373.15px;width:77px"><span>31020.43</span></div>
<div class="d" style="left:488.5px;top:373.15px;width:76.3px"><span>36913.7524</span></div>
<div class="d" style="left:564.8px;top:373.15px;width:88.9px"><span>-5894</span></div>
<div class="d" style="left:653.7px;top:373.15px;width:80px"><span>Not Met</span></div>
<div class="d" style="left:733.7px;top:373.15px;width:77px"><span>259</span></div>
<div class="d" style="left:810.7px;top:373.15px;width:64px"><span>119.77</span></div>
<div class="d" style="left:874.7px;top:373.15px;width:64px"><span>Rebecca Valencia</span></div>
<div class="d" style="left:938.7px;top:373.15px;width:72.8px"><span>4/8/2024</span></div>
<div class="d" style="left:1011.5px;top:373.15px;width:80px"><span>1.00</span></div>
<div class="d" style="left:1091.5px;top:373.15px;width:115px"><span>0</span></div>
<div class="d" style="left:1206.5px;top:373.15px;width:77.5px"><span>1</span></div>
<div class="d" style="left:35px;top:389.28px;width:67.5px"><span>76</span></div>
<div class="d" style="left:102.5px;top:389.28px;width:76px"><span>East</span></div>
<div class="d" style="left:178.5px;top:389.28px;width:80px"><span>Allison Hill</span></div>
<div class="d" style="left:258.5px;top:389.28px;width:76.5px"><span>Stationery</span></div>
<div class="d" style="left:335px;top:389.28px;width:76.5px"><span>1-Jun-24</span></div>
<div class="d" style="left:411.5px;top:389.28px;width:77px"><span>16665.83</span></div>
<div class="d" style="left:488.5px;top:389.28px;width:76.3px"><span>16332.4546</span></div>
<div class="d" style="left:564.8px;top:389.28px;width:88.9px"><span>333</span></div>
<div class="d" style="left:653.7px;top:389.28px;width:80px"><span>Met</span></div>
<div class="d" style="left:733.7px;top:389.28px;width:77px"><span>71</span></div>
<div class="d" style="left:810.7px;top:389.28px;width:64px"><span>234.73</span></div>
<div class="d" style="left:874.7px;top:389.28px;width:64px"><span>Marc Moore</span></div>
<div class="d" style="left:938.7px;top:389.28px;width:72.8px"><span>2/6/2024</span></div>
<div class="d" style="left:1011.5px;top:389.28px;width:80px"><span>0.00</span></div>
<div class="d" style="left:1091.5px;top:389.28px;width:115px"><span>1</span></div>
<div class="d" style="left:1206.5px;top:389.28px;width:77.5px"><span>1</span></div>
<div class="d" style="left:35px;top:405.41px;width:67.5px"><span>88</span></div>
<div class="d" style="left:102.5px;top:405.41px;width:76px"><span>West</span></div>
<div class="d" style="left:178.5px;top:405.41px;width:80px"><span>Allison Hill</span></div>
<div class="d" style="left:258.5px;top:405.41px;width:76.5px"><span>Stationery</span></div>
<div class="d" style="left:335px;top:405.41px;width:76.5px"><span>1-Jun-24</span></div>
<div class="d" style="left:411.5px;top:405.41px;width:77px"><span>9222.64</span></div>
<div class="d" style="left:488.5px;top:405.41px;width:76.3px"><span>7192.9026</span></div>
<div class="d" style="left:564.8px;top:405.41px;width:88.9px"><span>2029</span></div>
<div class="d" style="left:653.7px;top:405.41px;width:80px"><span>Met</span></div>
<div class="d" style="left:733.7px;top:405.41px;width:77px"><span>383</span></div>
<div class="d" style="left:810.7px;top:405.41px;width:64px"><span>24.08</span></div>
<div class="d" style="left:874.7px;top:405.41px;width:64px"><span>Ashley Waller</span></div>
<div class="d" style="left:938.7px;top:405.41px;width:72.8px"><span>6/6/2024</span></div>
<div class="d" style="left:1011.5px;top:405.41px;width:80px"><span>0.00</span></div>
<div class="d" style="left:1091.5px;top:405.41px;width:115px"><span>1</span></div>
<div class="d" style="left:1206.5px;top:405.41px;width:77.5px"><span>1</span></div>
<div class="d" style="left:35px;top:421.54px;width:67.5px"><span>92</span></div>
<div class="d" style="left:102.5px;top:421.54px;width:76px"><span>Central</span></div>
<div class="d" style="left:178.5px;top:421.54px;width:80px"><span>Angie Henderson</span></div>
<div class="d" style="left:258.5px;top:421.54px;width:76.5px"><span>Stationery</span></div>
<div class="d" style="left:335px;top:421.54px;width:76.5px"><span>1-Feb-24</span></div>
<div class="d" style="left:411.5px;top:421.54px;width:77px"><span>25791.15</span></div>
<div class="d" style="left:488.5px;top:421.54px;width:76.3px"><span>20117.8224</span></div>
<div class="d" style="left:564.8px;top:421.54px;width:88.9px"><span>5674</span></div>
<div class="d" style="left:653.7px;top:421.54px;width:80px"><span>Met</span></div>
<div class="d" style="left:733.7px;top:421.54px;width:77px"><span>435</span></div>
<div class="d" style="left:810.7px;top:421.54px;width:64px"><span>59.29</span></div>
<div class="d" style="left:874.7px;top:421.54px;width:64px"><span>Kenneth Scott</span></div>
<div class="d" style="left:938.7px;top:421.54px;width:72.8px"><span>4/2/2024</span></div>
<div class="d" style="left:1011.5px;top:421.54px;width:80px"><span>0.00</span></div>
<div class="d" style="left:1091.5px;top:421.54px;width:115px"><span>1</span></div>
<div class="d" style="left:1206.5px;top:421.54px;width:77.5px"><span>1</span></div>
<div class="d" style="left:35px;top:437.67px;width:67.5px"><span>106</span></div>
<div class="d" style="left:102.5px;top:437.67px;width:76px"><span>North</span></div>
<div class="d" style="left:178.5px;top:437.67px;width:80px"><span>Allison Hill</span></div>
<div class="d" style="left:258.5px;top:437.67px;width:76.5px"><span>Stationery</span></div>
<div class="d" style="left:335px;top:437.67px;width:76.5px"><span>1-Dec-24</span></div>
<div class="d" style="left:411.5px;top:437.67px;width:77px"><span>47261.84</span></div>
<div class="d" style="left:488.5px;top:437.67px;width:76.3px"><span>39226.1237</span></div>
<div class="d" style="left:564.8px;top:437.67px;width:88.9px"><span>8034</span></div>
<div class="d" style="left:653.7px;top:437.67px;width:80px"><span>Met</span></div>
<div class="d" style="left:733.7px;top:437.67px;width:77px"><span>386</span></div>
<div class="d" style="left:810.7px;top:437.67px;width:64px"><span>122.44</span></div>
<div class="d" style="left:874.7px;top:437.67px;width:64px"><span>Jose Schultz</span></div>
<div class="d" style="left:938.7px;top:437.67px;width:72.8px"><span>4/12/2024</span></div>
<div class="d" style="left:1011.5px;top:437.67px;width:80px"><span>0.00</span></div>
<div class="d" style="left:1091.5px;top:437.67px;width:115px"><span>1</span></div>
<div class="d" style="left:1206.5px;top:437.67px;width:77.5px"><span>1</span></div>
<div class="d" style="left:35px;top:453.8px;width:67.5px"><span>121</span></div>
<div class="d" style="left:102.5px;top:453.8px;width:76px"><span>Central</span></div>
<div class="d" style="left:178.5px;top:453.8px;width:80px"><span>Allison Hill</span></div>
<div class="d" style="left:258.5px;top:453.8px;width:76.5px"><span>Stationery</span></div>
<div class="d" style="left:335px;top:453.8px;width:76.5px"><span>1-Oct-24</span></div>
<div class="d" style="left:411.5px;top:453.8px;width:77px"><span>2971.53</span></div>
<div class="d" style="left:488.5px;top:453.8px;width:76.3px"><span>3476.4795</span></div>
<div class="d" style="left:564.8px;top:453.8px;width:88.9px"><span>-505</span></div>
<div class="d" style="left:653.7px;top:453.8px;width:80px"><span>Not Met</span></div>
<div class="d" style="left:733.7px;top:453.8px;width:77px"><span>241</span></div>
<div class="d" style="left:810.7px;top:453.8px;width:64px"><span>12.33</span></div>
<div class="d" style="left:874.7px;top:453.8px;width:64px"><span>David Wright</span></div>
<div class="d" style="left:938.7px;top:453.8px;width:72.8px"><span>5/10/2024</span></div>
<div class="d" style="left:1011.5px;top:453.8px;width:80px"><span>1.00</span></div>
<div class="d" style="left:1091.5px;top:453.8px;width:115px"><span>0</span></div>
<div class="d" style="left:1206.5px;top:453.8px;width:77.5px"><span>1</span></div>
<div class="d" style="left:35px;top:469.93px;width:67.5px"><span>122</span></div>
<div class="d" style="left:102.5px;top:469.93px;width:76px"><span>West</span></div>
<div class="d" style="left:178.5px;top:469.93px;width:80px"><span>Angie Henderson</span></div>
<div class="d" style="left:258.5px;top:469.93px;width:76.5px"><span>Stationery</span></div>
<div class="d" style="left:335px;top:469.93px;width:76.5px"><span>1-Mar-24</span></div>
<div class="d" style="left:411.5px;top:469.93px;width:77px"><span>49852.35</span></div>
<div class="d" style="left:488.5px;top:469.93px;width:76.3px"><span>61814.4092</span></div>
<div class="d" style="left:564.8px;top:469.93px;width:88.9px"><span>-11964</span></div>
<div class="d" style="left:653.7px;top:469.93px;width:80px"><span>Not Met</span></div>
<div class="d" style="left:733.7px;top:469.93px;width:77px"><span>417</span></div>
<div class="d" style="left:810.7px;top:469.93px;width:64px"><span>119.55</span></div>
<div class="d" style="left:874.7px;top:469.93px;width:64px"><span>Pamela Boyd</span></div>
<div class="d" style="left:938.7px;top:469.93px;width:72.8px"><span>4/3/2024</span></div>
<div class="d" style="left:1011.5px;top:469.93px;width:80px"><span>1.00</span></div>
<div class="d" style="left:1091.5px;top:469.93px;width:115px"><span>0</span></div>
<div class="d" style="left:1206.5px;top:469.93px;width:77.5px"><span>1</span></div>
<div class="d" style="left:35px;top:486.06px;width:67.5px"><span>123</span></div>
<div class="d" style="left:102.5px;top:486.06px;width:76px"><span>North</span></div>
<div class="d" style="left:178.5px;top:486.06px;width:80px"><span>Allison Hill</span></div>
<div class="d" style="left:258.5px;top:486.06px;width:76.5px"><span>Stationery</span></div>
<div class="d" style="left:335px;top:486.06px;width:76.5px"><span>1-Jul-24</span></div>
<div class="d" style="left:411.5px;top:486.06px;width:77px"><span>17331.6</span></div>
<div class="d" style="left:488.5px;top:486.06px;width:76.3px"><span>13692.3669</span></div>
<div class="d" style="left:564.8px;top:486.06px;width:88.9px"><span>3640</span></div>
<div class="d" style="left:653.7px;top:486.06px;width:80px"><span>Met</span></div>
<div class="d" style="left:733.7px;top:486.06px;width:77px"><span>440</span></div>
<div class="d" style="left:810.7px;top:486.06px;width:64px"><span>39.39</span></div>
<div class="d" style="left:874.7px;top:486.06px;width:64px"><span>Denise Jones</span></div>
<div class="d" style="left:938.7px;top:486.06px;width:72.8px"><span>2/7/2024</span></div>
<div class="d" style="left:1011.5px;top:486.06px;width:80px"><span>0.00</span></div>
<div class="d" style="left:1091.5px;top:486.06px;width:115px"><span>1</span></div>
<div class="d" style="left:1206.5px;top:486.06px;width:77.5px"><span>1</span></div>
<div class="d" style="left:35px;top:502.19px;width:67.5px"><span>128</span></div>
<div class="d" style="left:102.5px;top:502.19px;width:76px"><span>Central</span></div>
<div class="d" style="left:178.5px;top:502.19px;width:80px"><span>Allison Hill</span></div>
<div class="d" style="left:258.5px;top:502.19px;width:76.5px"><span>Stationery</span></div>
<div class="d" style="left:335px;top:502.19px;width:76.5px"><span>1-Aug-24</span></div>
<div class="d" style="left:411.5px;top:502.19px;width:77px"><span>44161.5</span></div>
<div class="d" style="left:488.5px;top:502.19px;width:76.3px"><span>44161.48</span></div>
<div class="d" style="left:564.8px;top:502.19px;width:88.9px"><span>0</span></div>
<div class="d" style="left:653.7px;top:502.19px;width:80px"><span>Met</span></div>
<div class="d" style="left:733.7px;top:502.19px;width:77px"><span>15</span></div>
<div class="d" style="left:810.7px;top:502.19px;width:64px"><span>2944.1</span></div>
<div class="d" style="left:874.7px;top:502.19px;width:64px"><span>Jason Stein</span></div>
<div class="d" style="left:938.7px;top:502.19px;width:72.8px"><span>6/8/2024</span></div>
<div class="d" style="left:1011.5px;top:502.19px;width:80px"><span>0.00</span></div>
<div class="d" style="left:1091.5px;top:502.19px;width:115px"><span>1</span></div>
<div class="d" style="left:1206.5px;top:502.19px;width:77.5px"><span>1</span></div>
</div>
<div class="a" style="left:0;top:575px;width:1280px;height:9px;background:#fff;border-top:1px solid #e3e3e3"></div>
<div class="a" style="left:0;top:576px;width:34px;height:8px;background:#f6f7f8"></div>
<div class="a" style="left:34px;top:575px;width:1px;height:9px;background:#e1e1e1"></div>
<div class="a" style="left:37px;top:577px;width:931px;height:6px;border-radius:3px;background:#dadce0"></div>
<div class="a" style="left:1257px;top:576px;width:11.5px;height:8px;background:#f7f7f7;border-left:1px solid #ececec"></div>
<div class="a" style="left:1268.5px;top:576px;width:11.5px;height:8px;background:#f7f7f7;border-left:1px solid #ececec"></div>
<svg class="a" style="left:1257px;top:575px" width="23" height="10"><path d="M7 3 L4.6 5 L7 7 Z" fill="#9aa0a6"/><path d="M16.6 3 L19 5 L16.6 7 Z" fill="#9aa0a6"/></svg>
<div class="a" style="left:0;top:584px;width:1280px;height:2px;background:#eef0f3"></div>
</body></html>
